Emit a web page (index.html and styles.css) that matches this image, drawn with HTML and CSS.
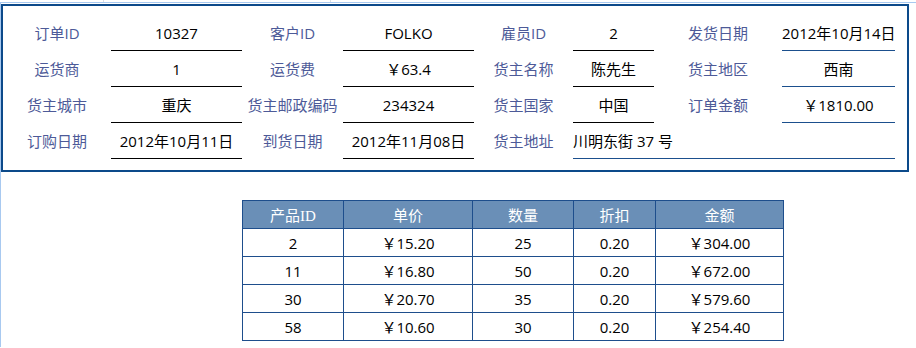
FILE: index.html
```html
<!DOCTYPE html>
<html lang="zh-CN">
<head>
<meta charset="utf-8">
<title>订单详情</title>
<link rel="stylesheet" href="styles.css">
</head>
<body>
<div class="ticks"><span class="tick"></span><span class="tick"></span></div>
<div class="frame">
  <div class="order">
    <div class="form">
      <div class="lbl">订单ID</div><div class="val">10327</div>
      <div class="lbl">客户ID</div><div class="val">FOLKO</div>
      <div class="lbl">雇员ID</div><div class="val">2</div>
      <div class="lbl">发货日期</div><div class="val blue">2012年10月14日</div>

      <div class="lbl">运货商</div><div class="val">1</div>
      <div class="lbl">运货费</div><div class="val">￥63.4</div>
      <div class="lbl">货主名称</div><div class="val">陈先生</div>
      <div class="lbl">货主地区</div><div class="val blue">西南</div>

      <div class="lbl">货主城市</div><div class="val">重庆</div>
      <div class="lbl">货主邮政编码</div><div class="val">234324</div>
      <div class="lbl">货主国家</div><div class="val">中国</div>
      <div class="lbl">订单金额</div><div class="val blue">￥1810.00</div>

      <div class="lbl">订购日期</div><div class="val">2012年10月11日</div>
      <div class="lbl">到货日期</div><div class="val">2012年11月08日</div>
      <div class="lbl">货主地址</div><div class="val blue addr">川明东街 37 号</div>
    </div>
  </div>

  <table class="items">
    <colgroup>
      <col class="c1"><col class="c2"><col class="c3"><col class="c4"><col class="c5">
    </colgroup>
    <thead>
      <tr><th>产品ID</th><th>单价</th><th>数量</th><th>折扣</th><th>金额</th></tr>
    </thead>
    <tbody>
      <tr><td>2</td><td>￥15.20</td><td>25</td><td>0.20</td><td>￥304.00</td></tr>
      <tr><td>11</td><td>￥16.80</td><td>50</td><td>0.20</td><td>￥672.00</td></tr>
      <tr><td>30</td><td>￥20.70</td><td>35</td><td>0.20</td><td>￥579.60</td></tr>
      <tr><td>58</td><td>￥10.60</td><td>30</td><td>0.20</td><td>￥254.40</td></tr>
    </tbody>
  </table>
</div>
</body>
</html>
```
FILE: styles.css
```css
html, body {
  margin: 0;
  padding: 0;
  background: #ffffff;
}
body {
  width: 916px;
  height: 348px;
  overflow: hidden;
  font-family: "Open Sans", "Noto Sans CJK SC", sans-serif;
  font-size: 15px;
  color: #000;
}
.ticks {
  display: flex;
  height: 2px;
  padding-left: 103px;
  gap: 226px;
}
.tick {
  width: 1px;
  height: 2px;
  background: #d9dee6;
}
.frame {
  border-top: 1px solid #a8c9f0;
  border-left: 1px solid #a8c9f0;
  height: 345px;
  padding-top: 1px;
  box-sizing: border-box;
}
.order {
  width: 908px;
  box-sizing: border-box;
  border: 2px solid #0c4a8a;
  padding: 9px 12px 11px 0;
}
.form {
  display: grid;
  grid-template-columns: 108px 131px 101px 131px 99px 81px 128px 113px;
  grid-auto-rows: 36px;
}
.lbl, .val {
  line-height: 34px;
  padding-top: 1px;
  text-align: center;
  white-space: nowrap;
}
.lbl {
  color: #4d5a98;
}
.val {
  border-bottom: 1px solid #000;
}
.val.blue {
  border-bottom-color: #1b4f8d;
}
.val.addr {
  grid-column: 6 / 9;
  text-align: left;
}
.items {
  margin: 28px 0 0 241px;
  border-collapse: collapse;
  table-layout: fixed;
  width: 541px;
}
.c1 { width: 101px; }
.c2 { width: 129px; }
.c3 { width: 101px; }
.c4 { width: 82px; }
.c5 { width: 128px; }
.items th, .items td {
  border: 1px solid #1e4e8c;
  padding: 0;
  height: 27px;
  text-align: center;
  font-weight: normal;
  white-space: nowrap;
}
.items th {
  background: #6a8fb7;
  color: #fff;
  font-family: "Liberation Serif", "Noto Sans CJK SC", serif;
}
```
